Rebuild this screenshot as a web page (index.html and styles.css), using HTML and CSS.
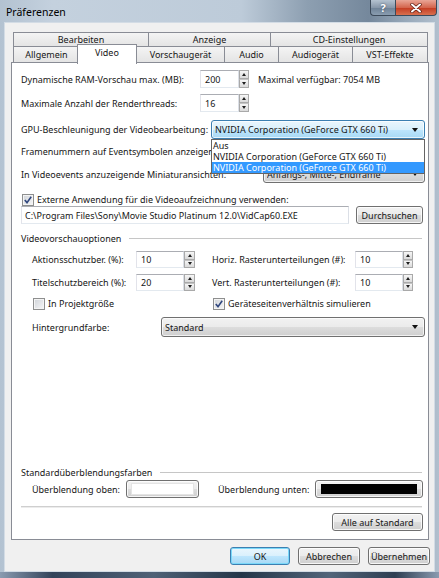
FILE: index.html
```html
<!DOCTYPE html>
<html lang="de">
<head>
  <meta charset="UTF-8" />
  <title>Präferenzen</title>
  <link rel="stylesheet" href="styles.css">
</head>
<body>
  <div class="window">

    <!-- Title bar -->
    <div class="titlebar">
      <div class="title">Präferenzen</div>
      <div class="caption">
        <span class="cap help">?</span>
        <span class="cap close">
          <svg width="12" height="10" viewBox="0 0 12 10">
            <path d="M2 1.5 L10 8.5 M10 1.5 L2 8.5" stroke="#5a1a10" stroke-width="3.4" stroke-linecap="round" fill="none"/>
            <path d="M2 1.5 L10 8.5 M10 1.5 L2 8.5" stroke="#fff" stroke-width="2" stroke-linecap="round" fill="none"/>
          </svg>
        </span>
      </div>
    </div>

    <div class="client">

      <!-- Tabs -->
      <div class="tabs">
        <div class="tab-row back">
          <div class="tab">Bearbeiten</div>
          <div class="tab">Anzeige</div>
          <div class="tab">CD-Einstellungen</div>
        </div>
        <div class="tab-row front">
          <div class="tab">Allgemein</div>
          <div class="tab active">Video</div>
          <div class="tab">Vorschaugerät</div>
          <div class="tab">Audio</div>
          <div class="tab">Audiogerät</div>
          <div class="tab">VST-Effekte</div>
        </div>
      </div>

      <!-- Video page -->
      <div class="panel">
        <div class="row r-ram">
          <span class="lbl-main">Dynamische RAM-Vorschau max. (MB):</span>
          <span class="field f-short">200</span>
          <span class="spin"><i></i><i></i></span>
          <span class="hint">Maximal verfügbar: 7054 MB</span>
        </div>

        <div class="row r-threads">
          <span class="lbl-main">Maximale Anzahl der Renderthreads:</span>
          <span class="field f-short">16</span>
          <span class="spin"><i></i><i></i></span>
        </div>

        <div class="row r-gpu">
          <span class="lbl-gpu">GPU-Beschleunigung der Videobearbeitung:</span>
          <div class="combo-wrap">
            <div class="combo open">
              <span class="value">NVIDIA Corporation (GeForce GTX 660 Ti)</span>
              <span class="arrow"></span>
            </div>
            <ul class="droplist">
              <li>Aus</li>
              <li>NVIDIA Corporation (GeForce GTX 660 Ti)</li>
              <li class="selected">NVIDIA Corporation (GeForce GTX 660 Ti)</li>
            </ul>
          </div>
        </div>

        <div class="row r-frames">
          <span class="lbl-gpu lbl-clip">Framenummern auf Eventsymbolen anzeigen als:</span>
        </div>

        <div class="row r-thumbs">
          <span>In Videoevents anzuzeigende Miniaturansichten:</span>
          <div class="combo c-right">
            <span class="value">Anfangs-, Mitte-, Endframe</span>
            <span class="arrow"></span>
          </div>
        </div>

        <div class="row r-capture">
          <span class="cb checked">
            <svg width="8" height="8" viewBox="0 0 8 8"><path d="M0.8 4 L3 6.6 L7.2 0.8" stroke="#31477e" stroke-width="1.6" fill="none"/></svg>
          </span>
          <span class="cb-text">Externe Anwendung für die Videoaufzeichnung verwenden:</span>
        </div>

        <div class="row r-path">
          <span class="field f-path">C:\Program Files\Sony\Movie Studio Platinum 12.0\VidCap60.EXE</span>
          <button class="btn b-browse">Durchsuchen</button>
        </div>

        <div class="row group r-group">
          <span>Videovorschauoptionen</span>
        </div>

        <div class="row r-grid indent">
          <span class="lbl-small">Aktionsschutzber. (%):</span>
          <span class="field f-mid">10</span>
          <span class="spin s-wide"><i></i><i></i></span>
          <span class="lbl-grid">Horiz. Rasterunterteilungen (#):</span>
          <span class="field f-mid">10</span>
          <span class="spin"><i></i><i></i></span>
        </div>

        <div class="row r-grid indent">
          <span class="lbl-small">Titelschutzbereich (%):</span>
          <span class="field f-mid">20</span>
          <span class="spin s-wide"><i></i><i></i></span>
          <span class="lbl-grid">Vert. Rasterunterteilungen (#):</span>
          <span class="field f-mid">10</span>
          <span class="spin"><i></i><i></i></span>
        </div>

        <div class="row r-checks indent">
          <span class="check-item">
            <span class="cb"></span>
            <span class="cb-text">In Projektgröße</span>
          </span>
          <span class="check-item">
            <span class="cb checked">
              <svg width="8" height="8" viewBox="0 0 8 8"><path d="M0.8 4 L3 6.6 L7.2 0.8" stroke="#31477e" stroke-width="1.6" fill="none"/></svg>
            </span>
            <span class="cb-text">Geräteseitenverhältnis simulieren</span>
          </span>
        </div>

        <div class="row r-bg indent">
          <span class="lbl-bg">Hintergrundfarbe:</span>
          <div class="combo c-fill">
            <span class="value">Standard</span>
            <span class="arrow"></span>
          </div>
        </div>

        <div class="row group r-fadegroup">
          <span>Standardüberblendungsfarben</span>
        </div>

        <div class="row r-fades indent">
          <span class="lbl-fade-top">Überblendung oben:</span>
          <button class="btn swatch sw-top"><span class="chip white"></span></button>
          <span class="lbl-fade-bottom">Überblendung unten:</span>
          <button class="btn swatch sw-bottom"><span class="chip black"></span></button>
        </div>

        <div class="sep"></div>

        <div class="row r-reset">
          <button class="btn b-reset">Alle auf Standard</button>
        </div>
      </div>

      <!-- Dialog buttons -->
      <div class="footer">
        <button class="btn default">OK</button>
        <button class="btn">Abbrechen</button>
        <button class="btn">Übernehmen</button>
      </div>
    </div>

    <div class="frame-bottom"></div>
  </div>
</body>
</html>
```

FILE: styles.css
```css
* {
  box-sizing: border-box;
}

body {
  margin: 0;
  font-family: 'Noto Sans', 'Open Sans', sans-serif;
  font-size: 9px;
  color: #161616;
}

/* Window frame */
.window {
  width: 439px;
  height: 578px;
  display: flex;
  flex-direction: column;
  background: linear-gradient(90deg, #b3c2d1 0%, #c4d1de 12%, #bdcbd9 55%, #8d9fb1 70%, #75889c 84%, #96a7b8 92%, #b2c0ce 100%);
}

.titlebar {
  height: 22px;
  flex-shrink: 0;
  display: flex;
  justify-content: space-between;
  align-items: flex-start;
}

.title {
  padding: 5px 0 0 6px;
  font-size: 10.5px;
  color: #000;
}

.caption {
  display: flex;
  margin-right: 2px;
}

.cap {
  height: 16px;
  display: flex;
  align-items: center;
  justify-content: center;
  border: 1px solid #3c4a5a;
  border-top: none;
  color: #fff;
  font-weight: bold;
}

.cap.help {
  width: 25px;
  border-right: none;
  border-radius: 0 0 0 4px;
  font-size: 11px;
  text-shadow: 0 0 2px #34465a;
  background: linear-gradient(#b4c2d0, #8898aa 50%, #6d8196 51%, #8a9db0);
}

.cap.close {
  width: 42px;
  border-radius: 0 0 4px 0;
  background: linear-gradient(#e9a696, #d4664e 50%, #c33a20 51%, #d8704f);
}

.client {
  flex: 1;
  margin: 0 4px;
  background: #f0f0f0;
  border: 1px solid #d3dce5;
  padding: 9px 5px 6px 6px;
  display: flex;
  flex-direction: column;
}

.frame-bottom {
  height: 6px;
  flex-shrink: 0;
  background: linear-gradient(90deg, #8a9bb0, #32435a 12%, #4f6176 35%, #243649 55%, #52657a 75%, #2e3e52 90%, #8a9bb0);
}

/* Tabs */
.tabs {
  padding: 0 1px 0 2px;
}

.tab-row {
  display: grid;
}

.tab-row.back {
  grid-template-columns: 135px 122px 1fr;
  height: 14px;
}

.tab-row.front {
  grid-template-columns: 66px 57px 88px 54px 74px 1fr;
  height: 16px;
}

.tab {
  border: 1px solid #898c95;
  border-bottom: none;
  margin-right: -1px;
  background: linear-gradient(#f4f4f4, #e3e3e3);
  text-align: center;
  line-height: 14px;
  white-space: nowrap;
}

.tab:last-child {
  margin-right: 0;
}

.tab-row.front .tab {
  line-height: 16px;
}

.tab-row.front .tab.active {
  background: #fff;
  margin: -2px -1px -1px -2px;
  position: relative;
  z-index: 2;
  line-height: 15px;
}

/* Page */
.panel {
  flex: 1;
  background: #fff;
  border: 1px solid #898c95;
  padding: 0 3px 8px 9px;
  display: flex;
  flex-direction: column;
}

.row {
  display: flex;
  align-items: center;
  flex-shrink: 0;
  white-space: nowrap;
}

.indent {
  padding-left: 11px;
}

.r-ram { margin-top: 7px; height: 18px; }
.r-threads { margin-top: 6px; height: 18px; }
.r-gpu { margin-top: 8px; height: 19px; }
.r-frames { margin-top: 3px; height: 18px; }
.r-thumbs { margin-top: 5px; height: 18px; }
.r-capture { margin-top: 10px; height: 13px; }
.r-path { height: 18px; }
.r-group { margin-top: 7px; height: 14px; }
.r-grid { margin-top: 6px; height: 17px; }
.r-checks { margin-top: 6px; height: 13px; }
.r-bg { margin-top: 7px; height: 20px; }
.r-fadegroup { margin-top: auto; height: 14px; }
.r-fades { margin-top: 1px; height: 18px; }
.r-reset { margin-top: 5px; height: 18px; justify-content: flex-end; }

.lbl-main { width: 179px; }
.lbl-gpu { width: 190px; }
.lbl-clip { overflow: hidden; }
.lbl-small { width: 104px; }
.lbl-grid { width: 143px; margin-left: 17px; }
.lbl-bg { width: 129px; }
.lbl-fade-top { width: 94px; }
.lbl-fade-bottom { width: 97px; margin-left: 19px; }

.hint {
  margin-left: 9px;
}

/* Text boxes and spinners */
.field {
  height: 100%;
  border: 1px solid;
  border-color: #abadb3 #dbdfe6 #e3e9ef #e2e3ea;
  background: #fff;
  padding-left: 4px;
  display: flex;
  align-items: center;
  overflow: hidden;
}

.f-short { width: 39px; }
.f-mid { width: 48px; }
.f-path { flex: 1; padding-left: 3px; }

.spin {
  width: 10px;
  height: 100%;
  display: flex;
  flex-direction: column;
}

.spin.s-wide {
  width: 11px;
}

.spin i {
  flex: 1;
  border: 1px solid #a9a9a9;
  background: linear-gradient(#f6f6f6, #dadada);
  display: flex;
  align-items: center;
  justify-content: center;
}

.spin i + i {
  border-top-color: #c4c4c4;
}

.spin i::after {
  content: '';
  border-left: 2.5px solid transparent;
  border-right: 2.5px solid transparent;
  border-bottom: 3px solid #1e1e1e;
}

.spin i + i::after {
  border-bottom: none;
  border-top: 3px solid #1e1e1e;
}

/* Combo boxes */
.combo-wrap {
  flex: 1;
  height: 100%;
  position: relative;
}

.combo {
  height: 100%;
  border: 1px solid #707070;
  border-radius: 3px;
  display: flex;
  align-items: center;
  padding: 0 6px 0 3px;
  background: linear-gradient(#f2f2f2 0%, #ebebeb 50%, #dddddd 50%, #cfcfcf 100%);
  box-shadow: inset 0 0 0 1px rgba(255, 255, 255, 0.7);
}

.combo.open {
  border-color: #3c7fb1;
  background: linear-gradient(#eaf6fd 0%, #d9f0fc 50%, #bee6fd 50%, #a7d9f5 100%);
}

.combo .value {
  flex: 1;
  overflow: hidden;
}

.combo .arrow {
  border-left: 3.5px solid transparent;
  border-right: 3.5px solid transparent;
  border-top: 4px solid #111;
}

.c-right {
  width: 162px;
  margin-left: auto;
}

.c-fill {
  flex: 1;
}

.droplist {
  position: absolute;
  top: 100%;
  left: 0;
  right: 0;
  z-index: 5;
  margin: 0;
  padding: 0;
  list-style: none;
  background: #fff;
  border: 1px solid #646464;
  line-height: 11px;
}

.droplist li {
  padding-left: 1px;
}

.droplist li.selected {
  background: #3399ff;
  color: #fff;
}

/* Check boxes */
.cb {
  width: 12px;
  height: 12px;
  flex-shrink: 0;
  margin-left: 1px;
  border: 1px solid #8e8f8f;
  background: linear-gradient(135deg, #cfd3d8, #f7f7f8);
  box-shadow: inset 0 0 0 1px #f4f4f4;
  display: flex;
  align-items: center;
  justify-content: center;
}

.cb-text {
  margin-left: 3px;
}

.check-item {
  display: flex;
  align-items: center;
}

.check-item:first-child {
  width: 180px;
}

/* Group headers */
.group::after {
  content: '';
  flex: 1;
  height: 1px;
  margin: 0 3px 0 8px;
  background: #c6c6c6;
}

/* Buttons */
.btn {
  font: inherit;
  color: #161616;
  height: 18px;
  padding: 0;
  border: 1px solid #707070;
  border-radius: 3px;
  background: linear-gradient(#f2f2f2 0%, #ebebeb 50%, #dddddd 50%, #cfcfcf 100%);
  box-shadow: inset 0 0 0 1px rgba(255, 255, 255, 0.8);
}

.btn.default {
  border-color: #3c7fb1;
  background: linear-gradient(#eaf6fd 0%, #d9f0fc 50%, #bee6fd 50%, #a7d9f5 100%);
  box-shadow: inset 0 0 0 1px #7ad8f9;
}

.b-browse {
  width: 67px;
  margin: 0 2px 0 7px;
}

.b-reset {
  width: 91px;
  margin-right: 2px;
}

.swatch {
  display: flex;
  align-items: center;
  padding: 0 5px 0 5px;
}

.sw-top { width: 73px; }
.sw-bottom { width: 108px; }

.chip {
  flex: 1;
  height: 10px;
}

.chip.white {
  background: #fff;
  box-shadow: 0 0 0 1px #e4e4e4;
}

.chip.black {
  background: #000;
}

.sep {
  flex-shrink: 0;
  height: 2px;
  margin: 8px 3px 0 0;
  border-top: 1px solid #cfcfcf;
  border-bottom: 1px solid #ececec;
}

.footer {
  flex-shrink: 0;
  margin: 7px -1px 0 0;
  display: flex;
  justify-content: flex-end;
}

.footer .btn {
  width: 62px;
  margin-left: 8px;
}

.footer .btn.default {
  width: 60px;
}
```
